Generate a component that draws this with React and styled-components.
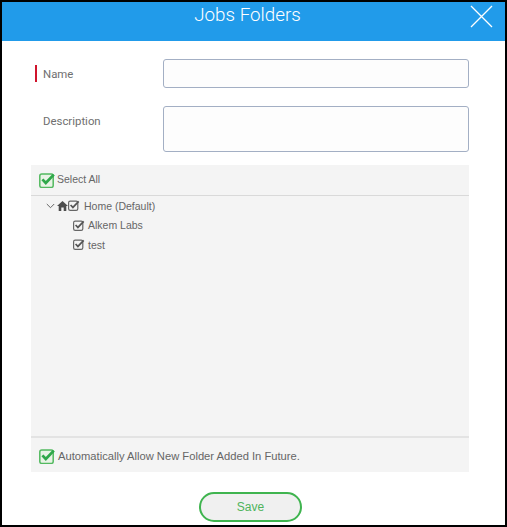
import React from 'react';
import styled, { createGlobalStyle } from 'styled-components';

const GlobalStyle = createGlobalStyle`
	html, body {
		margin: 0;
		padding: 0;
		background: #fff;
	}
	* {
		box-sizing: border-box;
	}
`;

const Dialog = styled.div`
	width: 507px;
	height: 527px;
	border: 2px solid #000;
	background: #fff;
	overflow: hidden;
	font-family: 'Liberation Sans', Arial, sans-serif;
	color: #666;
`;

const Header = styled.div`
	height: 39px;
	background: #219bea;
	display: flex;
	align-items: center;
	justify-content: center;
	position: relative;
`;

const Title = styled.h1`
	margin: 0 12px 13px 0;
	font-family: Roboto, sans-serif;
	font-weight: 300;
	font-size: 18.8px;
	color: #fff;
`;

const CloseButton = styled.button`
	position: absolute;
	top: 3px;
	right: 11px;
	width: 24px;
	height: 24px;
	padding: 0;
	border: 0;
	background: none;
	display: flex;
`;

const Body = styled.div`
	padding: 18px 36px 0 29px;
`;

const FormRow = styled.div`
	display: flex;
	margin-bottom: ${(p) => p.$gap}px;
`;

const LabelCell = styled.div`
	width: 132px;
	display: flex;
	align-items: flex-start;
	padding-left: 4px;
`;

const RequiredMark = styled.span`
	width: 2px;
	height: 17px;
	margin-top: 6px;
	background: ${(p) => (p.$on ? '#d0142c' : 'transparent')};
`;

const Label = styled.label`
	margin: 8px 0 0 6px;
	font-family: Roboto, sans-serif;
	font-size: 11.4px;
	color: #6f6f6f;
`;

const TextInput = styled.input`
	width: 306px;
	height: 29px;
	border: 1px solid #a3afc4;
	border-radius: 3px;
	background: #fdfdfd;
`;

const TextArea = styled.textarea`
	width: 306px;
	height: 46px;
	border: 1px solid #a3afc4;
	border-radius: 3px;
	background: #fdfdfd;
	resize: none;
	display: block;
`;

const Panel = styled.div`
	width: 438px;
	height: 307px;
	background: #f4f4f4;
	display: flex;
	flex-direction: column;
`;

const PanelTop = styled.div`
	height: 31px;
	padding: 7px 0 0 8px;
	display: flex;
	align-items: flex-start;
	border-bottom: 1px solid #d9d9d9;
	font-size: 10.5px;
	line-height: 15px;
`;

const Tree = styled.div`
	flex: 1;
	padding: 0 0 0 15px;
`;

const TreeRow = styled.div`
	height: 19.5px;
	display: flex;
	align-items: center;
	padding-left: ${(p) => p.$indent}px;
	font-size: 10.5px;
	color: #666;
`;

const RowText = styled.span`
	margin-left: ${(p) => p.$gap}px;
`;

const PanelBottom = styled.div`
	height: 36px;
	padding: 2px 0 0 8px;
	display: flex;
	align-items: center;
	border-top: 2px solid #e3e3e3;
	font-size: 11.2px;
`;

const Footer = styled.div`
	display: flex;
	justify-content: center;
	padding: 20px 0 0 0;
	margin-left: 29px;
	width: 439px;
`;

const SaveButton = styled.button`
	width: 103px;
	height: 30px;
	border: 2px solid #3fb44f;
	border-radius: 15px;
	background: #f0f0f0;
	color: #4fb45c;
	font-family: 'Liberation Sans', Arial, sans-serif;
	font-size: 12px;
`;

const GreenCheck = () => (
	<svg width="17" height="16" viewBox="0 0 17 16">
		<rect x="0.8" y="2" width="13.4" height="13.4" rx="2" fill="#e9f3e6" stroke="#52b95f" strokeWidth="1.5" />
		<path d="M3.4 7.4l3.4 3.6 8-8.4" fill="none" stroke="#2fa84a" strokeWidth="2.8" />
	</svg>
);

const SmallCheck = () => (
	<svg width="12" height="11" viewBox="0 0 12 11">
		<rect x="0.6" y="1.1" width="9.2" height="9.2" rx="1.6" fill="#f4f4f4" stroke="#666" strokeWidth="1.2" />
		<path d="M2.6 5l2.3 2.4 5.8-6" fill="none" stroke="#555" strokeWidth="1.7" />
	</svg>
);

const Chevron = () => (
	<svg width="9" height="6" viewBox="0 0 9 6">
		<path d="M0.8 1l3.7 3.7L8.2 1" fill="none" stroke="#666" strokeWidth="1" />
	</svg>
);

const HomeIcon = styled.svg`
	margin-left: 2px;
`;

const App = () => {
	return (
		<Dialog>
			<GlobalStyle />
			<Header>
				<Title>Jobs Folders</Title>
				<CloseButton aria-label="close">
					<svg width="24" height="24" viewBox="0 0 24 24">
						<path d="M1 1l21 21M22 1L1 22" stroke="#fff" strokeWidth="1.3" fill="none" />
					</svg>
				</CloseButton>
			</Header>
			<Body>
				<FormRow $gap={18}>
					<LabelCell>
						<RequiredMark $on />
						<Label>Name</Label>
					</LabelCell>
					<TextInput />
				</FormRow>
				<FormRow $gap={13}>
					<LabelCell>
						<RequiredMark />
						<Label>Description</Label>
					</LabelCell>
					<TextArea />
				</FormRow>
				<Panel>
					<PanelTop>
						<GreenCheck />
						<RowText $gap={1}>Select All</RowText>
					</PanelTop>
					<Tree>
						<TreeRow $indent={0}>
							<Chevron />
							<HomeIcon width="11" height="10" viewBox="0 0 11 10">
								<path d="M5.5 0L0 5h1.7v5h2.6V6.6h2.4V10h2.6V5H11z" fill="#4d4d4d" />
							</HomeIcon>
							<SmallCheck />
							<RowText $gap={4}>Home (Default)</RowText>
						</TreeRow>
						<TreeRow $indent={27}>
							<SmallCheck />
							<RowText $gap={3}>Alkem Labs</RowText>
						</TreeRow>
						<TreeRow $indent={27}>
							<SmallCheck />
							<RowText $gap={3}>test</RowText>
						</TreeRow>
					</Tree>
					<PanelBottom>
						<GreenCheck />
						<RowText $gap={2}>Automatically Allow New Folder Added In Future.</RowText>
					</PanelBottom>
				</Panel>
			</Body>
			<Footer>
				<SaveButton>Save</SaveButton>
			</Footer>
		</Dialog>
	);
};

export default App;
